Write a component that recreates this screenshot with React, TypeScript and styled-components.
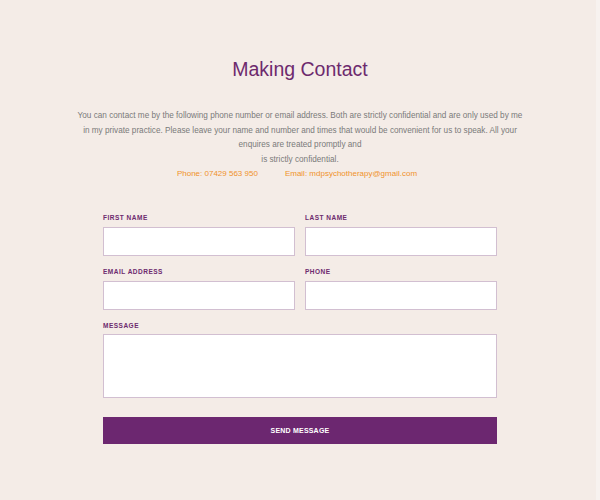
import React from "react";
import styled, { createGlobalStyle } from "styled-components";

const GlobalStyle = createGlobalStyle`
  html, body {
    margin: 0;
    padding: 0;
    background: #f4ece7;
    font-family: "Liberation Sans", Arial, sans-serif;
  }
`;

const Page = styled("div")`
  width: 600px;
  height: 500px;
  box-sizing: border-box;
  padding-top: 57px;
  display: flex;
  flex-direction: column;
  align-items: center;
  box-shadow: inset -4px 0 0 #f7f2ef;
`;

const Title = styled("h1")`
  margin: 0;
  font-size: 19.5px;
  font-weight: normal;
  color: #6d2a6e;
  line-height: 24px;
`;

const Intro = styled("p")`
  width: 450px;
  margin: 28px 0 0;
  text-align: center;
  font-size: 8.2px;
  line-height: 14.5px;
  color: #7a7a7a;
`;

const ContactLine = styled("div")`
  display: flex;
  gap: 27px;
  justify-content: center;
  margin-right: 6px;
  font-size: 8px;
  line-height: 14px;
  color: #f0922b;
`;

const Form = styled("form")`
  width: 394px;
  margin-top: 33px;
  display: grid;
  grid-template-columns: 1fr 1fr;
  column-gap: 10px;
  row-gap: 12px;
`;

const Field = styled("label")<{ $wide?: boolean }>`
  display: flex;
  flex-direction: column;
  gap: ${(p) => (p.$wide ? "4px" : "5px")};
  grid-column: ${(p) => (p.$wide ? "1 / span 2" : "auto")};
`;

const LabelText = styled("span")`
  font-size: 6.5px;
  font-weight: bold;
  letter-spacing: 0.5px;
  color: #6d2a6e;
  line-height: 8px;
`;

const Input = styled("input")`
  box-sizing: border-box;
  height: 29px;
  border: 1px solid #d2bfd1;
  background: #fff;
  margin: 0;
  outline: none;
`;

const TextArea = styled("textarea")`
  box-sizing: border-box;
  height: 64px;
  border: 1px solid #d2bfd1;
  background: #fff;
  margin: 0;
  resize: none;
  outline: none;
`;

const SendButton = styled("button")`
  grid-column: 1 / span 2;
  margin-top: 7px;
  height: 27px;
  border: none;
  background: #6c2770;
  color: #fff;
  font-family: "Liberation Sans", Arial, sans-serif;
  font-size: 7px;
  font-weight: bold;
  letter-spacing: 0.2px;
`;

export default function App() {
  return (
    <Page>
      <GlobalStyle />
      <Title>Making Contact</Title>
      <Intro>
        You can contact me by the following phone number or email address. Both are strictly
        confidential and are only used by me in my private practice. Please leave your name and
        number and times that would be convenient for us to speak. All your enquires are treated
        promptly and
        <br />
        is strictly confidential.
      </Intro>
      <ContactLine>
        <span>Phone: 07429 563 950</span>
        <span>Email: mdpsychotherapy@gmail.com</span>
      </ContactLine>
      <Form onSubmit={(e) => e.preventDefault()}>
        <Field>
          <LabelText>FIRST NAME</LabelText>
          <Input />
        </Field>
        <Field>
          <LabelText>LAST NAME</LabelText>
          <Input />
        </Field>
        <Field>
          <LabelText>EMAIL ADDRESS</LabelText>
          <Input />
        </Field>
        <Field>
          <LabelText>PHONE</LabelText>
          <Input />
        </Field>
        <Field $wide>
          <LabelText>MESSAGE</LabelText>
          <TextArea />
        </Field>
        <SendButton type="submit">SEND MESSAGE</SendButton>
      </Form>
    </Page>
  );
}
